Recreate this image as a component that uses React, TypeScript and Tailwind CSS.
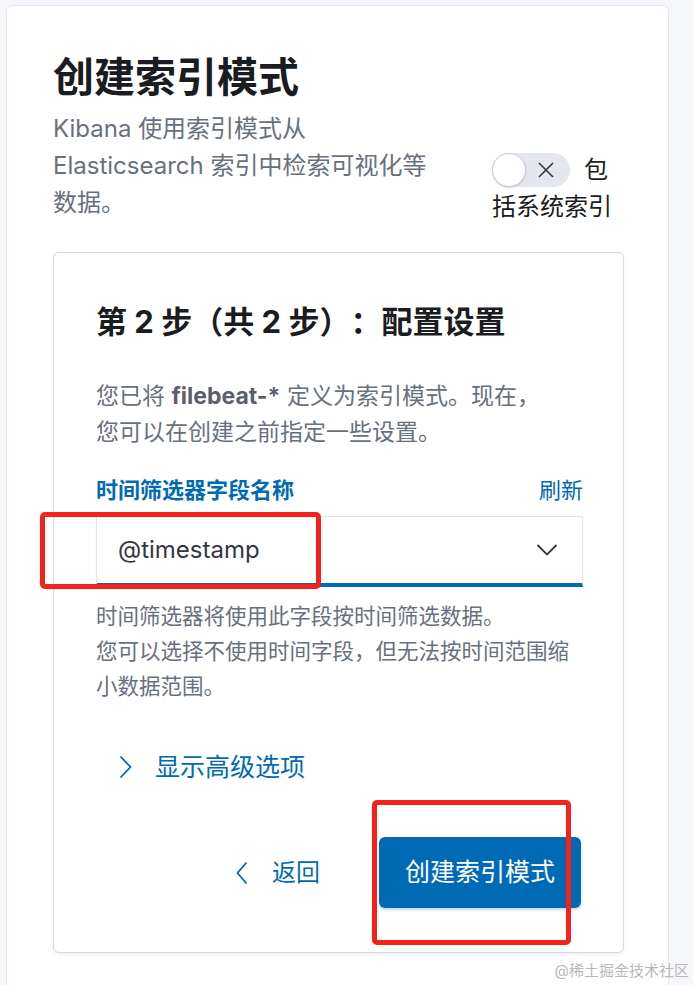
import React from 'react';

const font = { fontFamily: 'Inter, "Noto Sans CJK SC", sans-serif' };

function ChevronDown() {
  return (
    <svg width="22" height="14" viewBox="0 0 22 14" fill="none">
      <polyline points="1.5,2 11,11.5 20.5,2" stroke="#343741" strokeWidth="1.8" />
    </svg>
  );
}

function ChevronRight() {
  return (
    <svg width="13" height="24" viewBox="0 0 13 24" fill="none">
      <polyline points="1.5,1.5 11.5,12 1.5,22.5" stroke="#006bb4" strokeWidth="1.8" />
    </svg>
  );
}

function ChevronLeft() {
  return (
    <svg width="12" height="24" viewBox="0 0 12 24" fill="none">
      <polyline points="10.5,1.5 1.5,12 10.5,22.5" stroke="#006bb4" strokeWidth="1.8" />
    </svg>
  );
}

function Toggle() {
  return (
    <span className="inline-flex h-[34px] w-[78px] items-center rounded-full bg-[#e4e8ee] align-middle">
      <span className="h-[34px] w-[34px] rounded-full border border-[#c9ced6] bg-white shadow-[0_1px_2px_rgba(0,0,0,0.15)]" />
      <svg className="ml-[11px]" width="18" height="18" viewBox="0 0 18 18" fill="none">
        <path d="M2 2L16 16M16 2L2 16" stroke="#343741" strokeWidth="1.6" />
      </svg>
    </span>
  );
}

export default function App() {
  return (
    <div className="relative min-h-[985px] overflow-hidden bg-[#f5f7fa] pt-[5px] pl-[6px]" style={font}>
      <div className="min-h-[980px] w-[663px] rounded-t-[6px] border border-b-0 border-[#e3e8ef] bg-white pt-[47px] pl-[46px] pr-[44px]">
        <div className="flex items-end justify-between">
          <div className="w-[392px]">
            <h1 className="text-[41px] leading-[49px] font-bold text-[#1a1c21]">创建索引模式</h1>
            <p className="mt-2 text-[24px] leading-[37px] text-[#69707d]">
              Kibana 使用索引模式从 Elasticsearch 索引中检索可视化等数据。
            </p>
          </div>
          <div className="-mb-1 w-[132px] text-[24px] leading-[37px] text-[#1a1c21]">
            <Toggle />
            <span className="ml-[14px] align-middle">包</span>括系统索引
          </div>
        </div>

        <div className="mt-[31px] rounded-[6px] border border-[#d3dae6] bg-white pt-[49px] pb-[44px] pl-[42px] pr-[40px] shadow-[0_2px_3px_rgba(0,0,0,0.06)]">
          <h2 className="text-[31px] leading-[40px] font-bold text-[#1a1c21] [text-spacing-trim:space-all]">
            第 2 步（共 2 步）：配置设置
          </h2>
          <p className="mt-[36px] text-[23px] leading-[36px] text-[#69707d]">
            您已将 <strong className="font-bold text-[#5a606b]">filebeat-*</strong> 定义为索引模式。现在，
            <br />
            您可以在创建之前指定一些设置。
          </p>

          <div className="mt-[25px] flex items-center justify-between text-[22px] leading-[30px]">
            <span className="font-bold text-[#006bb4]">时间筛选器字段名称</span>
            <span className="text-[#006bb4]">刷新</span>
          </div>

          <div className="mt-[11px] flex h-[71px] items-center justify-between border border-b-4 border-[#e1e5ec] border-b-[#006bb4] bg-white pl-[21px] pr-[24px] shadow-[0_1px_2px_rgba(0,0,0,0.04)]">
            <span className="text-[24px] text-[#343741]">@timestamp</span>
            <ChevronDown />
          </div>

          <p className="mt-[12px] text-[21.5px] leading-[35px] text-[#69707d]">
            时间筛选器将使用此字段按时间筛选数据。
            <br />
            您可以选择不使用时间字段，但无法按时间范围缩小数据范围。
          </p>

          <div className="mt-[46px] flex items-center pl-[23px] text-[25px] leading-[34px] text-[#006bb4]">
            <ChevronRight />
            <span className="ml-[23px]">显示高级选项</span>
          </div>

          <div className="mt-[53px] flex items-center justify-end">
            <div className="flex items-center text-[24px] text-[#006bb4]">
              <ChevronLeft />
              <span className="ml-[24px]">返回</span>
            </div>
            <button className="ml-[59px] mr-[2px] h-[71px] w-[202px] rounded-[6px] bg-[#006bb4] text-[25px] text-white shadow-[0_2px_3px_rgba(0,107,180,0.25)]">
              创建索引模式
            </button>
          </div>
        </div>
      </div>

      {/* red annotation boxes */}
      <div className="absolute top-[512px] left-[40px] h-[77px] w-[281px] rounded-[5px] border-[5px] border-[#f5211a]" />
      <div className="absolute top-[800px] left-[372px] h-[145px] w-[199px] rounded-[5px] border-[5px] border-[#f5211a]" />

      <div className="absolute right-[4px] bottom-[4px] text-[15px] leading-[20px] text-[#b8b8b8]">
        @稀土掘金技术社区
      </div>
    </div>
  );
}
